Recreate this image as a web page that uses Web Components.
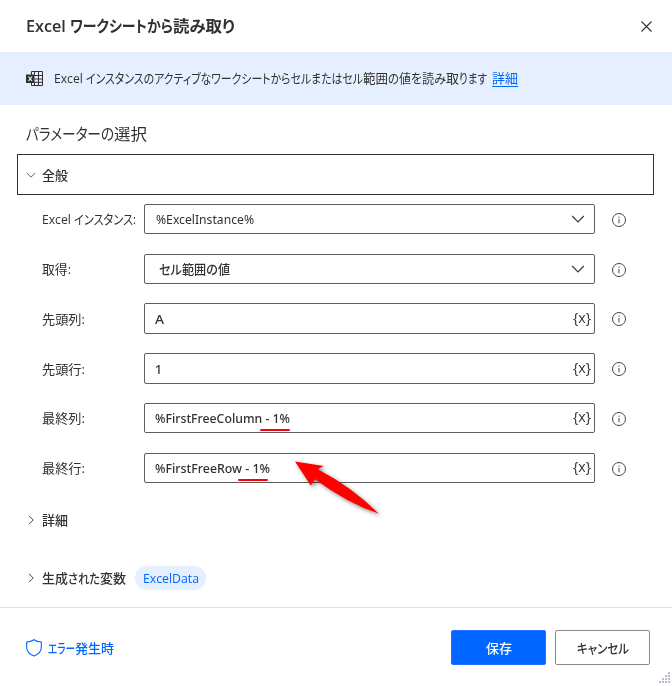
<!DOCTYPE html>
<html lang="ja">
<head>
<meta charset="utf-8">
<title>Excel ワークシートから読み取り</title>
<style>
html,body{margin:0;height:100%}
body{background:#fff;color:#323130;font:13px/18px "Open Sans","Noto Sans CJK JP",sans-serif;overflow:hidden}
</style>
</head>
<body>
<action-dialog></action-dialog>
<script>
const define = (name, html, setup) => customElements.define(name, class extends HTMLElement {
  connectedCallback() {
    if (this.shadowRoot) return;
    const t = document.createElement('template');
    t.innerHTML = typeof html === 'function' ? html(this) : html;
    this.attachShadow({mode: 'open'}).append(t.content.cloneNode(true));
    if (setup) setup(this);
  }
});

/* A run of text condensed or expanded to the advance given in "w". */
define('fit-text', el => `<style>
  :host{display:inline-block;white-space:pre;width:${el.getAttribute('w')}px;vertical-align:baseline}
  span{display:inline-block;transform-origin:0 50%;font-feature-settings:"palt"}
</style><span>${el.textContent}</span>`, el => {
  const s = el.shadowRoot.querySelector('span');
  const n = s.getBoundingClientRect().width;
  if (n) s.style.transform = `scaleX(${el.getAttribute('w') / n})`;
});

define('chevron-icon', el => `<style>:host{display:block;flex:none}svg{display:block}</style>` + ({
  small: '<svg width="10" height="10" viewBox="0 0 10 10" fill="none" stroke="#605e5c"><path d="M.8 3 5 7.2 9.2 3"/></svg>',
  right: '<svg width="10" height="10" viewBox="0 0 10 10" fill="none" stroke="#484644"><path d="M3 .8 7.2 5 3 9.2"/></svg>',
  large: '<svg width="14" height="10" viewBox="0 0 14 10" fill="none" stroke="#323c48" stroke-width="1.2"><path d="M1.2 2 7 7.8 12.8 2"/></svg>'
})[el.getAttribute('kind')]);

define('info-icon', `<style>:host{display:block;width:14px;flex:none}svg{display:block}</style>
<svg width="14" height="14" viewBox="0 0 14 14" fill="none" stroke="#484644"><circle cx="7" cy="7" r="6.5"/><path d="M7 6v4.3M7 3.6v1.2"/></svg>`);

define('param-row', el => `<style>
  :host{display:grid;grid-template-columns:102px 451px 14px;column-gap:0;align-items:center;height:${el.getAttribute('h') || 30}px}
  .label{white-space:nowrap}
  .field{box-sizing:border-box;height:100%;border:1px solid #605e5c;border-radius:2px;display:flex;align-items:center;justify-content:space-between;padding:0 3px 0 10px;background:#fff}
  .field.select{padding:0 9px 0 11px}
  .var{font-size:14px;line-height:16px;padding-bottom:2px}
  info-icon{margin-left:17px;margin-top:1px}
  .value{font-weight:${el.getAttribute('weight') || 500};font-family:"Noto Sans","Noto Sans CJK JP",sans-serif}
</style>
<div class="label"><slot name="label"></slot></div>
<div class="field ${el.hasAttribute('select') ? 'select' : ''}"><span class="value"><slot></slot></span>${
  el.hasAttribute('select') ? '<chevron-icon kind="large"></chevron-icon>' : '<fit-text class="var" w="18">{x}</fit-text>'}</div>
<info-icon></info-icon>`);

define('section-head', el => `<style>
  :host{display:flex;align-items:center;box-sizing:border-box;font-weight:500}
  chevron-icon{margin-right:6px}
</style><chevron-icon kind="${el.hasAttribute('open') ? 'small' : 'right'}"></chevron-icon><slot></slot>`);

define('dialog-button', `<style>
  :host{display:flex;box-sizing:border-box;width:95px;height:35px;align-items:center;justify-content:center;border:1px solid #8a8886;border-radius:2px;font-weight:500;background:#fff}
  :host([primary]){background:#0066ff;border-color:#1a75ff;color:#fff}
</style><slot></slot>`);

define('red-arrow', `<style>:host{display:block;position:absolute;left:285px;top:450px}svg{display:block}</style>
<svg width="110" height="80" viewBox="285 450 110 80"><path d="M295 461.5 323.5 466 317.7 469.3Q352 487 378.8 513.8Q347 503 315 479.3L310.8 485.5Z" fill="#f00" style="filter:drop-shadow(2px 2px 2px #0007)"/></svg>`);

define('under-mark', `<style>:host{display:block;position:absolute;width:30px;height:2px;background:#fa0010;border-radius:1px}</style>`);

define('action-dialog', `<style>
  :host{display:flex;flex-direction:column;width:672px;height:686px;position:relative;background:#fff}
  header{height:52px;display:flex;align-items:center;justify-content:space-between;padding:0 20px 0 26px;box-sizing:border-box;font-size:16px;font-weight:600}
  .banner{height:53px;background:#e5efff;display:flex;align-items:center;padding-left:26px;box-sizing:border-box}
  .banner svg{margin-right:11px}
  .banner div{margin-top:-2px}
  .link{color:#0066ff;border-bottom:1px solid #0066ff;display:inline-block;height:15px;line-height:15px;margin-left:5px}
  h2{margin:0;font-size:16px;line-height:22px;font-weight:400;padding:18px 0 0 26px;height:31px}
  .general{margin:0 18px 0 17px;height:41px;border:1px solid #323130;padding:0 0 0 8px}
  .params{display:flex;flex-direction:column;padding:9px 0 0 42px}
  .params>*{margin-bottom:20px}
  .params>.near{margin-bottom:19px}
  .sub{padding-left:26px;height:24px}
  .details{margin-top:5px}
  .vars{margin-top:34px}
  .pill{display:flex;align-items:center;justify-content:center;background:#e5efff;color:#0066ff;border-radius:12px;width:71px;height:24px;margin-left:9px;font-weight:400}
  footer{position:relative;margin-top:17px;border-top:1px solid #e1e1e1;flex:1;display:flex;align-items:flex-start;padding:22px 22px 0 26px;gap:9px}
  .error{display:flex;align-items:center;height:35px;flex:1;color:#0066ff;font-weight:500}
  .error svg{margin-right:6px}
  .grip{position:absolute;right:1px;bottom:2px}
</style>
<header><div><fit-text w="44">Excel </fit-text><fit-text w="103">ワークシートから</fit-text><fit-text w="62">読み取り</fit-text></div>
<svg width="11" height="11" viewBox="0 0 11 11" stroke="#323130" stroke-width="1.1"><path d="M.5.5 10.5 10.5M10.5.5.5 10.5"/></svg></header>
<div class="banner">
<svg width="17" height="16" viewBox="0 0 17 16"><path d="M5.5 4V.5h11v14h-11V12M5.5 4.5h11M8.5 8h8M5.5 11.3h11M12.5.5v14M8.5.5V4m0 8v2.5" fill="none" stroke="#323130"/><path d="M0 3.5h8.5v8.5H0z" fill="#323130"/><path d="m2.5 5.5 3.5 4.5m0-4.5L2.5 10" stroke="#fff" stroke-width="1.2"/></svg>
<div><fit-text w="32">Excel </fit-text><fit-text w="277">インスタンスのアクティブなワークシートからセルまたはセル</fit-text><fit-text w="25">範囲</fit-text><fit-text w="11">の</fit-text><fit-text w="12">値</fit-text><fit-text w="11">を</fit-text><fit-text w="12">読</fit-text><fit-text w="12">み</fit-text><fit-text w="13">取</fit-text><fit-text w="28">ります</fit-text><span class="link"><fit-text w="26">詳細</fit-text></span></div>
</div>
<h2><fit-text w="88">パラメーターの</fit-text><fit-text w="33">選択</fit-text></h2>
<section-head class="general" open><fit-text w="26">全般</fit-text></section-head>
<div class="params">
<param-row select weight="400"><span slot="label"><fit-text w="32">Excel </fit-text><fit-text w="62">インスタンス:</fit-text></span><fit-text w="98">%ExcelInstance%</fit-text></param-row>
<param-row select class="near"><span slot="label"><fit-text w="29">取得:</fit-text></span><fit-text w="74"> セル範囲の値</fit-text></param-row>
<param-row h="31" class="near"><span slot="label"><fit-text w="43">先頭列:</fit-text></span><fit-text w="9">A</fit-text></param-row>
<param-row h="31" class="near"><span slot="label"><fit-text w="43">先頭行:</fit-text></span><fit-text w="7">1</fit-text></param-row>
<param-row><span slot="label"><fit-text w="43">最終列:</fit-text></span><fit-text w="135">%FirstFreeColumn - 1%</fit-text></param-row>
<param-row><span slot="label"><fit-text w="43">最終行:</fit-text></span><fit-text w="115">%FirstFreeRow - 1%</fit-text></param-row>
</div>
<section-head class="sub details"><fit-text w="26">詳細</fit-text></section-head>
<section-head class="sub vars"><fit-text w="26">生成</fit-text><fit-text w="32">された</fit-text><fit-text w="26">変数</fit-text><span class="pill"><fit-text w="56">ExcelData</fit-text></span></section-head>
<footer><div class="error"><svg width="16" height="18" viewBox="0 0 16 18" fill="none" stroke="#0066ff" stroke-width="1.1"><path d="M8 .8Q11 3 15.3 3V8.5Q15.3 14 8 17 .7 14 .7 8.5V3Q5 3 8 .8Z"/></svg><fit-text w="27">エラー</fit-text><fit-text w="39">発生時</fit-text></div>
<dialog-button primary><fit-text w="26">保存</fit-text></dialog-button><dialog-button><fit-text w="52">キャンセル</fit-text></dialog-button>
<svg class="grip" width="12" height="12" viewBox="0 0 12 12" fill="#b8bccb"><path d="M9 0h2v2H9zM6 3h2v2H6zM9 3h2v2H9zM3 6h2v2H3zM6 6h2v2H6zM9 6h2v2H9zM0 9h2v2H0zM3 9h2v2H3zM6 9h2v2H6zM9 9h2v2H9z"/></svg></footer>
<under-mark style="left:259.5px;top:429px"></under-mark><under-mark style="left:237.5px;top:479px"></under-mark><red-arrow></red-arrow>`);
</script>
</body>
</html>
